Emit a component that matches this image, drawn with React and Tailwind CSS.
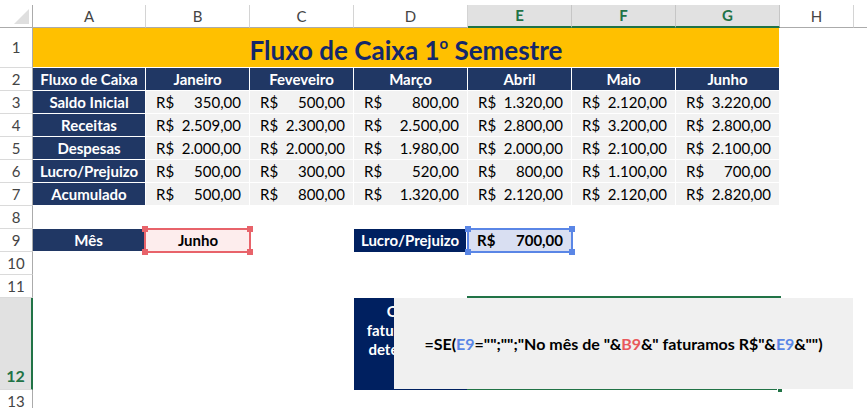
const months = ['Janeiro', 'Feveveiro', 'Março', 'Abril', 'Maio', 'Junho'];
const rows = [
  ['Saldo Inicial', ['350,00', '500,00', '800,00', '1.320,00', '2.120,00', '3.220,00']],
  ['Receitas', ['2.509,00', '2.300,00', '2.500,00', '2.800,00', '3.200,00', '2.800,00']],
  ['Despesas', ['2.000,00', '2.000,00', '1.980,00', '2.000,00', '2.100,00', '2.100,00']],
  ['Lucro/Prejuizo', ['500,00', '300,00', '520,00', '800,00', '1.100,00', '700,00']],
  ['Acumulado', ['500,00', '800,00', '1.320,00', '2.120,00', '2.120,00', '2.820,00']],
];

function RowHead({ n }) {
  return (
    <div className="flex items-center justify-center border-r border-b border-r-[#ababab] border-b-[#dadada] text-[15px] text-[#444]">
      {n}
    </div>
  );
}

function Empty() {
  return <div />;
}

function Handle({ pos, color }) {
  return <div className={`absolute w-[6px] h-[6px] ${pos} ${color}`} />;
}

export default function App() {
  const colHeads = ['A', 'B', 'C', 'D', 'E', 'F', 'G', 'H'];
  return (
    <div className="relative w-[867px] h-[408px] overflow-hidden bg-white font-['Lato',sans-serif]">
      <div className="h-[5px]" />
      <div className="grid grid-cols-[33px_113px_104px_104px_114px_104px_104px_104px_74px_13px] grid-rows-[23px_40px_repeat(10,23px)_92px_23px]">
        {/* header row */}
        <div className="relative border-r border-b border-[#ababab]">
          <div className="absolute right-[3px] bottom-[3px] w-0 h-0 border-l-[15px] border-l-transparent border-b-[15px] border-b-[#dfdfdf]" />
        </div>
        {colHeads.map((c) => {
          const sel = c === 'E' || c === 'F' || c === 'G';
          return sel ? (
            <div key={c} className="flex items-center justify-center bg-[#e1e1e1] border-r border-r-[#c6c6c6] border-b-2 border-b-[#217346] text-[15px] font-bold text-[#217346]">
              {c}
            </div>
          ) : (
            <div key={c} className="flex items-center justify-center border-r border-r-[#d4d4d4] border-b border-b-[#ababab] text-[15px] text-[#444]">
              {c}
            </div>
          );
        })}
        <div className="border-b border-b-[#ababab]" />

        {/* row 1 */}
        <RowHead n={1} />
        <div className="col-span-7 flex items-end justify-center bg-[#ffc000] border-r border-b border-white pb-[4px]">
          <span className="text-[26px] leading-none font-bold text-[#14286a]">
            Fluxo de Caixa 1<span className="inline-block align-top text-[15px] leading-none -translate-y-[1px]">o</span> Semestre
          </span>
        </div>
        <Empty />
        <Empty />

        {/* row 2 */}
        <RowHead n={2} />
        <div className="flex items-center justify-center bg-[#203764] border-r border-b border-white text-[15px] font-bold text-white">
          Fluxo de Caixa
        </div>
        {months.map((m) => (
          <div key={m} className="flex items-center justify-center bg-[#203764] border-r border-b border-white text-[15px] font-bold text-white">
            {m}
          </div>
        ))}
        <Empty />
        <Empty />

        {/* rows 3-7 */}
        {rows.map(([label, vals], i) => (
          <div key={label} className="contents">
            <RowHead n={i + 3} />
            <div className="flex items-center justify-center bg-[#203764] border-r border-b border-white text-[15px] font-bold text-white whitespace-nowrap">
              {label}
            </div>
            {vals.map((v, j) => (
              <div key={j} className="flex items-center justify-between bg-[#f2f2f2] border-r border-b border-white pl-[10px] pr-[8px] text-[15px] text-black">
                <span>R$</span>
                <span>{v}</span>
              </div>
            ))}
            <Empty />
            <Empty />
          </div>
        ))}

        {/* row 8 */}
        <RowHead n={8} />
        {Array.from({ length: 9 }).map((_, k) => (
          <Empty key={k} />
        ))}

        {/* row 9 */}
        <RowHead n={9} />
        <div className="flex items-center justify-center bg-[#203764] border-r-2 border-b border-white text-[15px] font-bold text-white">
          Mês
        </div>
        <div className="relative flex items-center justify-center bg-[#fdeded] text-[15px] font-bold text-black">
          <div className="absolute -left-[2px] -top-[1px] -right-[1px] -bottom-[1px] border-2 border-[#e8636a]" />
          <Handle pos="-left-[4px] -top-[3px]" color="bg-[#e8636a]" />
          <Handle pos="-right-[3px] -top-[3px]" color="bg-[#e8636a]" />
          <Handle pos="-left-[4px] -bottom-[3px]" color="bg-[#e8636a]" />
          <Handle pos="-right-[3px] -bottom-[3px]" color="bg-[#e8636a]" />
          <span className="relative">Junho</span>
        </div>
        <Empty />
        <div className="flex items-center justify-center bg-[#002060] border-r-2 border-white text-[15px] font-bold text-white whitespace-nowrap">
          Lucro/Prejuizo
        </div>
        <div className="relative flex items-center justify-between bg-[#d9dff2] pl-[9px] pr-[9px] text-[15px] font-bold text-black">
          <div className="absolute -left-[1px] -top-[1px] -right-[1px] -bottom-[1px] border-2 border-[#5a86e6]" />
          <Handle pos="-left-[3px] -top-[3px]" color="bg-[#5a86e6]" />
          <Handle pos="-right-[3px] -top-[3px]" color="bg-[#5a86e6]" />
          <Handle pos="-left-[3px] -bottom-[3px]" color="bg-[#5a86e6]" />
          <Handle pos="-right-[3px] -bottom-[3px]" color="bg-[#5a86e6]" />
          <span className="relative">R$</span>
          <span className="relative">700,00</span>
        </div>
        <Empty />
        <Empty />
        <Empty />
        <Empty />

        {/* rows 10, 11 */}
        <RowHead n={10} />
        {Array.from({ length: 9 }).map((_, k) => (
          <Empty key={`a${k}`} />
        ))}
        <RowHead n={11} />
        {Array.from({ length: 9 }).map((_, k) => (
          <Empty key={`b${k}`} />
        ))}

        {/* row 12 */}
        <div className="flex items-end justify-center bg-[#e1e1e1] border-r-2 border-r-[#217346] border-b border-b-[#dadada] text-[16px] font-bold text-[#217346] pb-[1px]">
          12
        </div>
        <Empty />
        <Empty />
        <Empty />
        <div className="flex flex-col items-center justify-start pt-[4px] bg-[#002060] text-[15px] leading-[19px] font-bold text-white overflow-hidden whitespace-nowrap">
          <span>O valor</span>
          <span>faturamos no</span>
          <span>determinado</span>
          <span>mês?</span>
        </div>
        <div className="relative col-span-3">
          <div className="absolute -left-[1px] -top-[2px] -right-[1px] -bottom-[0px] border-2 border-[#217346]" />
          <div className="absolute -right-[3px] -bottom-[3px] w-[6px] h-[6px] bg-[#217346] border border-white" />
        </div>
        <Empty />
        <Empty />

        {/* row 13 */}
        <RowHead n={13} />
        {Array.from({ length: 9 }).map((_, k) => (
          <Empty key={`c${k}`} />
        ))}
      </div>

      {/* formula tooltip overlay */}
      <div className="absolute left-[394px] top-[298px] w-[459px] h-[91px] bg-[#f0f0f0] flex items-center justify-center text-[16px] font-bold text-black whitespace-nowrap">
        <span>
          =SE(<span className="text-[#5a86e6]">E9</span>="";"";"No mês de "&amp;<span className="text-[#e8585c]">B9</span>&amp;" faturamos R$"&amp;<span className="text-[#5a86e6]">E9</span>&amp;"")
        </span>
      </div>
    </div>
  );
}
